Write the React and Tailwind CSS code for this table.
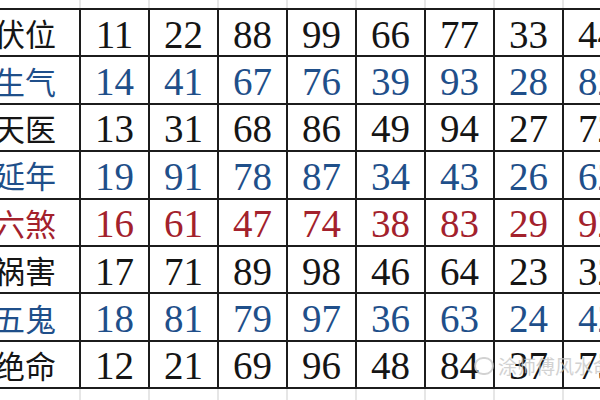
import React from 'react';

const rows = [
  { label: '伏位', nums: [11, 22, 88, 99, 66, 77, 33, 44], tone: 'black' },
  { label: '生气', nums: [14, 41, 67, 76, 39, 93, 28, 82], tone: 'blue' },
  { label: '天医', nums: [13, 31, 68, 86, 49, 94, 27, 72], tone: 'black' },
  { label: '延年', nums: [19, 91, 78, 87, 34, 43, 26, 62], tone: 'blue' },
  { label: '六煞', nums: [16, 61, 47, 74, 38, 83, 29, 92], tone: 'red' },
  { label: '祸害', nums: [17, 71, 89, 98, 46, 64, 23, 32], tone: 'black' },
  { label: '五鬼', nums: [18, 81, 79, 97, 36, 63, 24, 42], tone: 'blue' },
  { label: '绝命', nums: [12, 21, 69, 96, 48, 84, 37, 73], tone: 'black' },
];

const toneClass = {
  black: 'text-[#151515]',
  blue: 'text-[#1f4f8a]',
  red: 'text-[#a3212c]',
};

const Strip = ({ h }) => (
  <div className={`flex ${h}`}>
    <div className="w-[109px] shrink-0 border-r-2 border-[#e6e6e6]" />
    {Array.from({ length: 8 }).map((_, i) => (
      <div key={i} className="w-[69px] shrink-0 border-r-2 border-[#e6e6e6]" />
    ))}
  </div>
);

const App = () => {
  return (
    <div className="relative w-[600px] h-[400px] overflow-hidden bg-white">
      <div className="ml-[-28px] w-[700px]">
        <Strip h="h-[8px]" />

        {/* Table */}
        <div className="border-t-2 border-[#1c1c1c]">
          {rows.map((row) => (
            <div
              key={row.label}
              className={`flex h-[47.4px] border-b-2 border-[#1c1c1c] ${toneClass[row.tone]}`}
            >
              <div className="w-[109px] shrink-0 border-r-2 border-[#1c1c1c] flex items-center justify-end pr-[23px] font-['Noto_Sans_CJK_SC',sans-serif] text-[31px] leading-none whitespace-nowrap">
                {row.label}
              </div>
              {row.nums.map((n, i) => (
                <div
                  key={i}
                  className="w-[69px] shrink-0 border-r-2 border-[#1c1c1c] flex items-center justify-center font-['Liberation_Serif',serif] text-[39px] leading-none pt-[3px]"
                >
                  {n}
                </div>
              ))}
            </div>
          ))}
        </div>

        <Strip h="h-[20px]" />
      </div>

      {/* Watermark */}
      <div className="absolute left-[474px] top-[356px] flex items-center gap-1 text-[#c4c4c4] opacity-75 font-['Noto_Sans_CJK_SC',sans-serif] text-[19px] leading-none whitespace-nowrap">
        <span className="w-[20px] h-[18px] rounded-full border-2 border-[#c4c4c4] inline-block" />
        <span>涂师傅风水命</span>
      </div>
    </div>
  );
};

export default App;
